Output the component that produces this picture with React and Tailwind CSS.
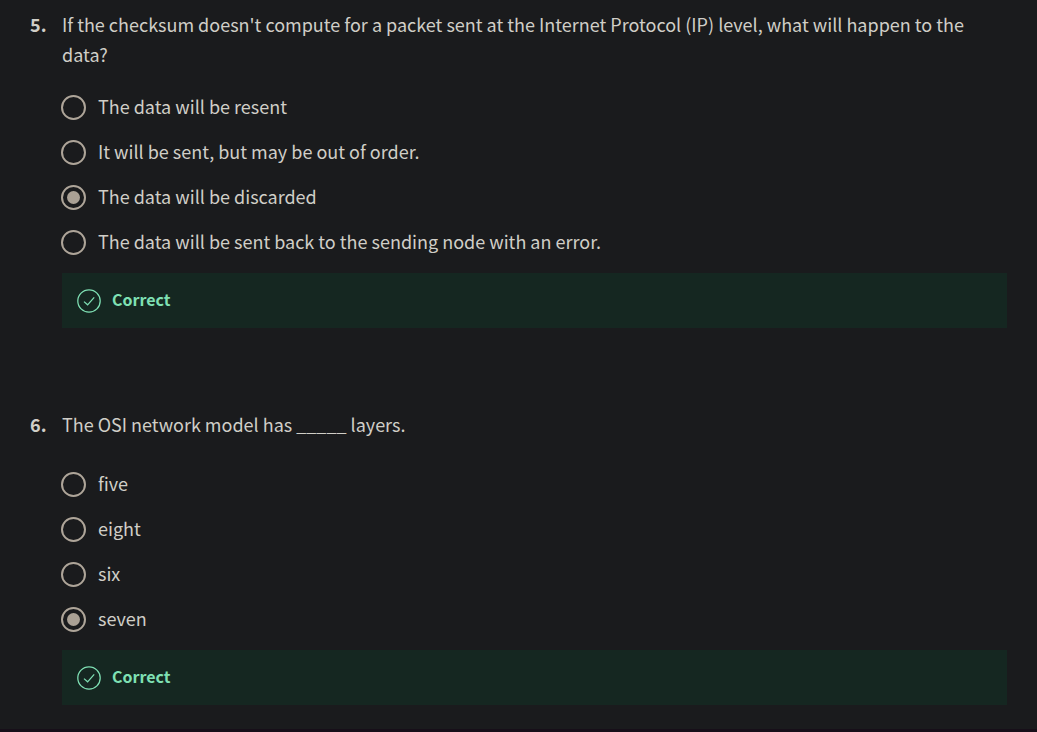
import React from 'react';

const questions = [
  {
    number: 5,
    text: "If the checksum doesn't compute for a packet sent at the Internet Protocol (IP) level, what will happen to the data?",
    options: [
      'The data will be resent',
      'It will be sent, but may be out of order.',
      'The data will be discarded',
      'The data will be sent back to the sending node with an error.',
    ],
    selected: 2,
    textSpacing: 'mb-4',
  },
  {
    number: 6,
    text: 'The OSI network model has _____ layers.',
    options: ['five', 'eight', 'six', 'seven'],
    selected: 3,
    textSpacing: 'mb-[23px]',
  },
];

function CheckCircle() {
  return (
    <svg
      viewBox="0 0 24 24"
      className="h-6 w-6 shrink-0"
      fill="none"
      stroke="currentColor"
      strokeWidth="1.25"
      aria-hidden="true"
    >
      <circle cx="12" cy="12" r="11.2" />
      <path d="M7 12.6 L10.6 15.8 L17.2 8.4" />
    </svg>
  );
}

function Option({ name, label, defaultChecked }) {
  const id = React.useId();
  return (
    <div className="-ml-px flex h-[45px] items-center gap-3">
      <input
        id={id}
        type="radio"
        name={name}
        defaultChecked={defaultChecked}
        className="grid h-[25px] w-[25px] shrink-0 appearance-none place-content-center rounded-full border-2 border-[#aea599] checked:before:h-[13px] checked:before:w-[13px] checked:before:rounded-full checked:before:bg-[#aaa195] checked:before:content-['']"
      />
      <label htmlFor={id} className="pb-[3px]">{label}</label>
    </div>
  );
}

function Question({ question }) {
  const name = `question-${question.number}`;
  return (
    <section className="flex">
      <span className="w-8 shrink-0 font-bold">{question.number}.</span>
      <fieldset className="min-w-0 flex-1">
        <legend className={question.textSpacing}>{question.text}</legend>
        {question.options.map((label, i) => (
          <Option key={label} name={name} label={label} defaultChecked={i === question.selected} />
        ))}
        <div className="mt-2 flex h-[55px] items-center gap-[11px] bg-[#152721] pl-[15px] text-base font-bold text-[#7fe0b4]">
          <CheckCircle />
          <span className="pb-[3px]">Correct</span>
        </div>
      </fieldset>
    </section>
  );
}

export default function App() {
  return (
    <main className="flex min-h-screen flex-col gap-[81px] border-b-3 border-[#170f19] bg-[#1a1b1d] px-[30px] pt-[9px] pb-6 font-['Noto_Sans_CJK_SC',sans-serif] text-lg leading-[30px] text-[#d0cec7]">
      {questions.map((q) => (
        <Question key={q.number} question={q} />
      ))}
    </main>
  );
}
